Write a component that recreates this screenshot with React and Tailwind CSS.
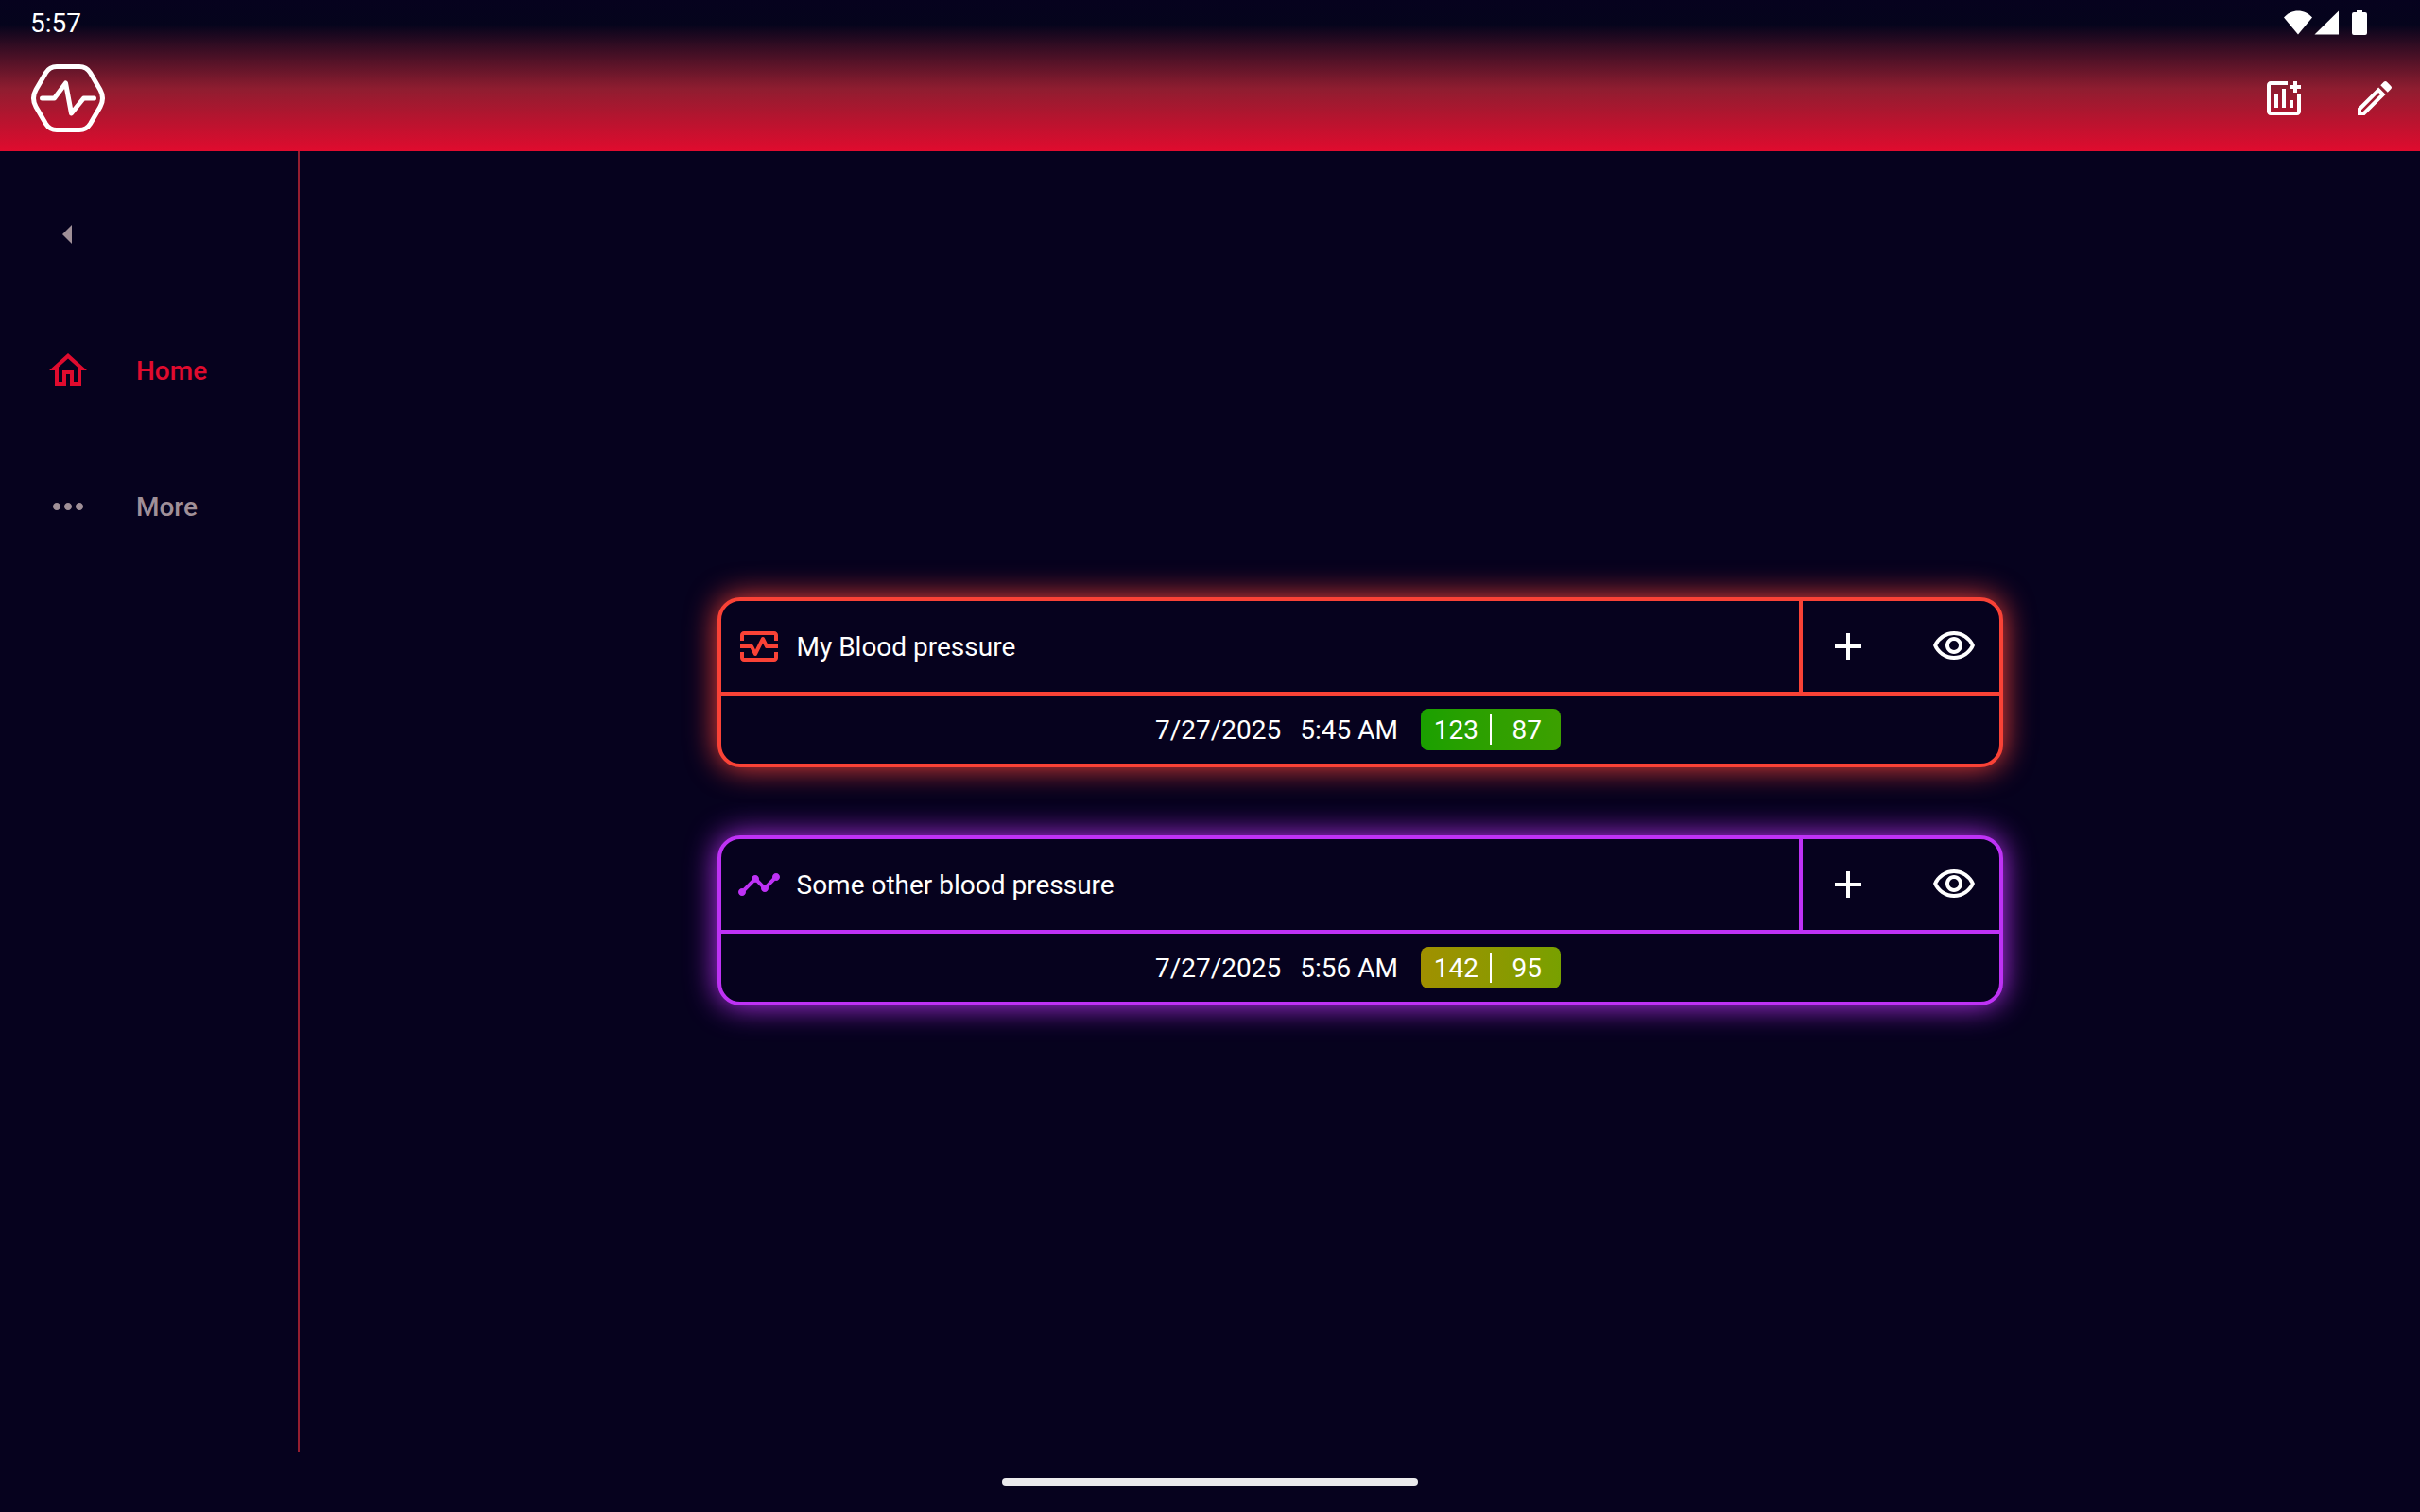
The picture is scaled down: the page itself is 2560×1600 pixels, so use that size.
import { MdAdd, MdArrowLeft, MdMoreHoriz, MdOutlineEdit, MdOutlineHome, MdOutlineMonitorHeart, MdOutlineVisibility, MdTimeline } from "react-icons/md";

function Logo() {
  return (
    <svg viewBox="0 0 80 80" className="size-20" fill="none" stroke="white" strokeWidth="5" strokeLinecap="round" strokeLinejoin="round" aria-hidden="true">
      <path d="M28 6.500H52Q59.500 6.500 63.500 13L74 31Q79 40 74 49L63.500 67Q59.500 73.500 52 73.500H28Q20.500 73.500 16.500 67L6 49Q1 40 6 31L16.500 13Q20.500 6.500 28 6.500Z" />
      <path d="M12.500 40H25.500L37.500 24L43.500 56L56.500 40H67.500" />
    </svg>
  );
}

function AddChartIcon() {
  return (
    <svg viewBox="0 0 24 24" className="size-12" fill="currentColor" aria-hidden="true">
      <path d="M14 3v2H5v14h14v-9h2v9c0 1.100-.9 2-2 2H5c-1.100 0-2-.9-2-2V5c0-1.100.9-2 2-2zM7 10h2v7H7zM11 7h2v10h-2zM15 13h2v4h-2zM17 3h2v2h2v2h-2v2h-2V7h-2V5h2z" />
    </svg>
  );
}

function StatusBar() {
  return (
    <div className="flex h-12 items-center justify-between pl-8 pr-14">
      <span>5:57</span>
      <svg viewBox="0 0 88 26" className="h-[26px] w-[88px]" fill="white" aria-hidden="true">
        <path d="M0 7.500C8 -2 22 -2 30 7.500L15 25.500Z" />
        <path d="M58 0.500V25.500H32.500Z" />
        <path d="M77 0h6v2h3q2 0 2 2v20q0 2-2 2H74q-2 0-2-2V4q0-2 2-2h3z" />
      </svg>
    </div>
  );
}

const iconButton = "flex size-24 cursor-pointer items-center justify-center rounded-full";

function Header() {
  return (
    <header className="bg-[linear-gradient(to_bottom,#06021e_0px,#05041c_26px,#8f1d30_94px,#e00b2e_160px)]">
      <StatusBar />
      <div className="flex h-28 items-center justify-between pl-8">
        <Logo />
        <div className="flex">
          <button type="button" aria-label="Add chart" className={iconButton}><AddChartIcon /></button>
          <button type="button" aria-label="Edit" className={iconButton}><MdOutlineEdit className="size-12" /></button>
        </div>
      </div>
    </header>
  );
}

function Sidebar() {
  return (
    <nav className="w-[317px] shrink-0 border-r-2 border-[#951e30] pt-4 font-medium text-[#a09098]">
      <button type="button" aria-label="Collapse menu" className="flex size-36 cursor-pointer items-center justify-center">
        <MdArrowLeft className="size-12" />
      </button>
      <a href="#home" className="flex h-36 items-center text-[#e00b2e]">
        <span className="flex w-36 justify-center"><MdOutlineHome className="size-12" /></span>
        Home
      </a>
      <a href="#more" className="flex h-36 items-center">
        <span className="flex w-36 justify-center"><MdMoreHoriz className="size-12" /></span>
        More
      </a>
    </nav>
  );
}

const meters = [
  {
    name: "My Blood pressure", Icon: MdOutlineMonitorHeart, date: "7/27/2025", time: "5:45 AM", systolic: 123, diastolic: 87,
    frame: "border-[#f94236] shadow-[0_0_32px_#f94236]", line: "border-[#f94236]", tint: "text-[#f94236]",
    badge: "from-[#1aa000] to-[#3ca000]",
  },
  {
    name: "Some other blood pressure", Icon: MdTimeline, date: "7/27/2025", time: "5:56 AM", systolic: 142, diastolic: 95,
    frame: "border-[#be32f5] shadow-[0_0_32px_#be32f5]", line: "border-[#be32f5]", tint: "text-[#be32f5]",
    badge: "from-[#a09000] to-[#78a000]",
  },
];

function MeterCard({ name, Icon, date, time, systolic, diastolic, frame, line, tint, badge }) {
  return (
    <article className={`rounded-3xl border-4 bg-[#06021e] ${frame}`}>
      <div className={`flex border-b-4 ${line}`}>
        <h2 className="flex flex-1 items-center gap-4 pl-4">
          <Icon className={`size-12 ${tint}`} />
          {name}
        </h2>
        <div className={`flex gap-4 border-l-4 ${line}`}>
          <button type="button" aria-label={`Add measurement to ${name}`} className={iconButton}><MdAdd className="size-12" /></button>
          <button type="button" aria-label={`View ${name}`} className={iconButton}><MdOutlineVisibility className="size-12" /></button>
        </div>
      </div>
      <div className="flex h-18 items-center justify-center pr-1">
        <span className="mr-5">{date}</span>
        <span className="mr-6">{time}</span>
        <span className={`flex h-11 items-center rounded-lg bg-linear-to-r ${badge}`}>
          <span className="w-[73px] pr-3 text-right">{systolic}</span>
          <span className="h-8 w-0.5 bg-white" />
          <span className="w-[73px] pr-5 text-right">{diastolic}</span>
        </span>
      </div>
    </article>
  );
}

export default function App() {
  return (
    <div className="flex min-h-screen flex-col bg-[#06021e] font-[Roboto,sans-serif] text-[28px] leading-[41px] text-white">
      <Header />
      <div className="flex flex-1">
        <Sidebar />
        <main className="flex flex-1 flex-col items-center justify-center gap-18 px-8">
          {meters.map((meter) => (
            <div key={meter.name} className="w-full max-w-[1360px]"><MeterCard {...meter} /></div>
          ))}
        </main>
      </div>
      <footer className="flex h-16 justify-center pt-7">
        <div className="h-2 w-[440px] rounded-full bg-[#ebebed]" />
      </footer>
    </div>
  );
}
